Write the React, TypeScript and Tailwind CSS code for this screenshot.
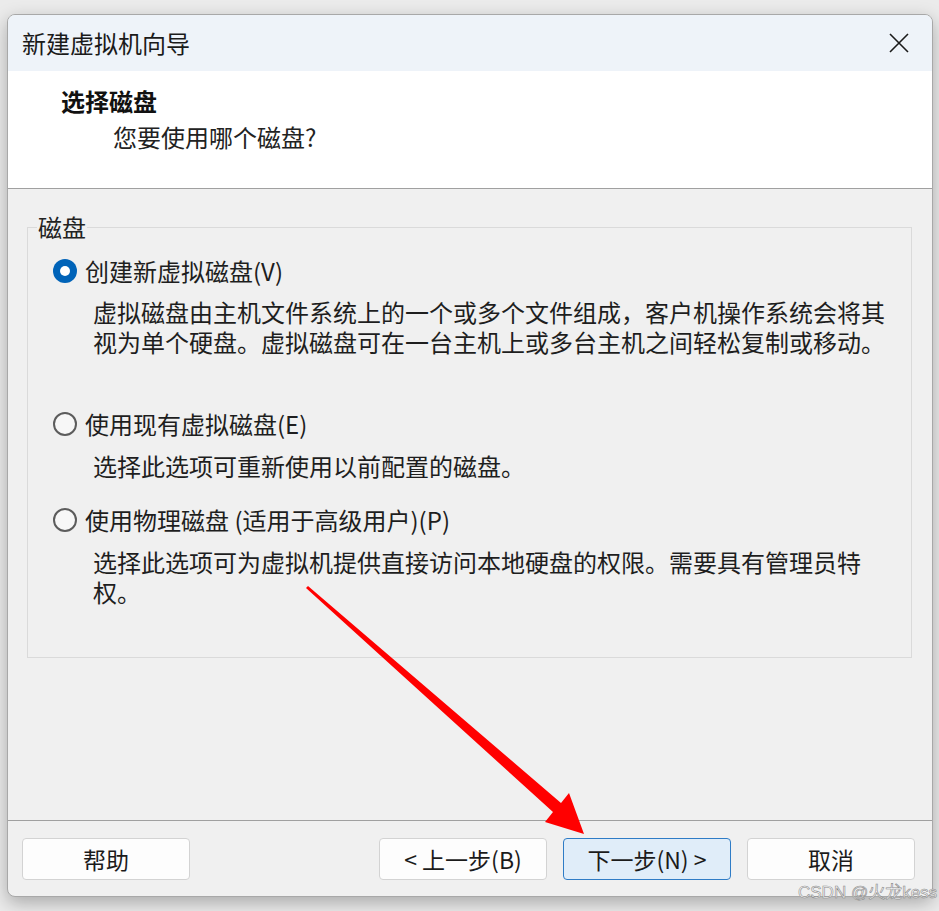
import React from "react";

const cjk = { fontFamily: '"Noto Sans CJK SC", "Noto Sans", sans-serif' };

function Radio({ checked }: { checked?: boolean }) {
  if (checked) {
    return (
      <div className="w-[24px] h-[24px] rounded-full bg-[#0063b8] flex items-center justify-center shrink-0">
        <div className="w-[10px] h-[10px] rounded-full bg-white" />
      </div>
    );
  }
  return <div className="w-[24px] h-[24px] rounded-full border-2 border-[#5c5c5c] bg-[#f7f7f7] shrink-0" />;
}

function Btn({ children, primary }: { children: React.ReactNode; primary?: boolean }) {
  return (
    <div
      className={
        "w-[168px] h-[42px] rounded-[4px] border flex items-center justify-center text-[23px] text-[#1b1b1b] " +
        (primary ? "bg-[#e0edf9] border-[#2f7cc6]" : "bg-[#fdfdfd] border-[#d3d3d3]")
      }
    >
      {children}
    </div>
  );
}

export default function App() {
  return (
    <div className="relative w-[939px] h-[911px] bg-[#ebebeb] pt-[14px] pl-[7px] overflow-hidden" style={cjk}>
      <div className="w-[926px] h-[883px] border border-[#a8a8a8] rounded-[8px] overflow-hidden flex flex-col shadow-[0_6px_18px_rgba(0,0,0,0.28)] bg-[#f0f0f0]">
        {/* title bar */}
        <div className="h-[56px] shrink-0 bg-[#eef3f9] flex items-center justify-between pl-[14px] pr-[23px]">
          <span className="text-[24px] leading-[30px] text-[#1a1a1a]">新建虚拟机向导</span>
          <svg width="20" height="20" viewBox="0 0 20 20">
            <path d="M1 1L19 19M19 1L1 19" stroke="#1a1a1a" strokeWidth="1.6" fill="none" />
          </svg>
        </div>
        {/* header */}
        <div className="h-[118px] shrink-0 bg-white border-b border-[#a0a0a0] pt-[15px]">
          <div className="pl-[53px] text-[24px] leading-[30px] font-bold text-[#111]">选择磁盘</div>
          <div className="pl-[105px] mt-[6px] text-[24px] leading-[30px] text-[#222]">您要使用哪个磁盘?</div>
        </div>
        {/* body */}
        <div className="h-[631px] shrink-0 pt-[38px] pl-[19px] pr-[20px]">
          <div className="relative h-[431px] border border-[#dadada]">
            <span className="absolute left-[9px] top-[-16px] px-[1px] bg-[#f0f0f0] text-[24px] leading-[30px] text-[#222]">磁盘</span>
            <div className="pt-[28px] pl-[25px] text-[24px] leading-[30px] text-[#1e1e1e]">
              <div className="flex items-center gap-[8px] h-[30px]">
                <Radio checked />
                <span>创建新虚拟磁盘(V)</span>
              </div>
              <p className="pl-[40px] mt-[11px]">
                虚拟磁盘由主机文件系统上的一个或多个文件组成，客户机操作系统会将其
                <br />
                视为单个硬盘。虚拟磁盘可在一台主机上或多台主机之间轻松复制或移动。
              </p>
              <div className="flex items-center gap-[8px] h-[30px] mt-[52px]">
                <Radio />
                <span>使用现有虚拟磁盘(E)</span>
              </div>
              <p className="pl-[40px] mt-[12px]">选择此选项可重新使用以前配置的磁盘。</p>
              <div className="flex items-center gap-[8px] h-[30px] mt-[24px]">
                <Radio />
                <span>使用物理磁盘 (适用于高级用户)(P)</span>
              </div>
              <p className="pl-[40px] mt-[12px]">
                选择此选项可为虚拟机提供直接访问本地硬盘的权限。需要具有管理员特
                <br />
                权。
              </p>
            </div>
          </div>
        </div>
        {/* footer */}
        <div className="flex-1 border-t border-[#a0a0a0] pt-[17px] pl-[14px] pr-[17px] flex items-start">
          <Btn>帮助</Btn>
          <div className="flex-1" />
          <div className="flex gap-[16px]">
            <Btn>&lt; 上一步(B)</Btn>
            <Btn primary>下一步(N) &gt;</Btn>
            <Btn>取消</Btn>
          </div>
        </div>
      </div>

      {/* red arrow annotation */}
      <svg className="absolute left-0 top-0 pointer-events-none" width="939" height="911" viewBox="0 0 939 911">
        <polygon
          points="308,585.9 561,803 569,793 584,834 545,822 553,812 306,588.1"
          fill="#ff0000"
        />
      </svg>

      {/* watermark */}
      <div
        className="absolute left-[798px] top-[881px] text-[17px] leading-[24px] text-white/80"
        style={{ fontFamily: '"Liberation Sans", "Noto Sans CJK SC", sans-serif', WebkitTextStroke: "0.6px #8a8a8a" }}
      >
        CSDN @火龙kess
      </div>
    </div>
  );
}
